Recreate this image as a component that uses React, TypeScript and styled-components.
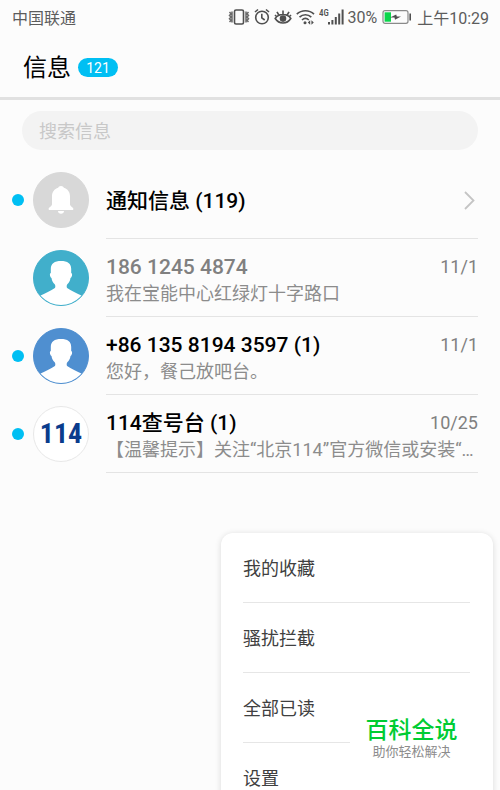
import React from "react";
import styled, { createGlobalStyle } from "styled-components";

const Global = createGlobalStyle`
  * { box-sizing: border-box; }
  body {
    margin: 0;
    background: #fcfcfc;
    font-family: Roboto, "Noto Sans CJK SC", sans-serif;
    color: #000;
  }
  button, input { font: inherit; color: inherit; }
`;

const Screen = styled.div`
  position: relative;
  min-height: 100vh;
  overflow: hidden;
`;

const StatusBar = styled.div`
  display: flex;
  align-items: center;
  justify-content: space-between;
  height: 34px;
  padding: 0 11px 0 12px;
  font-size: 16px;
  color: #5c5c5c;
`;

const StatusGroup = styled.div`
  display: flex;
  align-items: center;
  gap: 5px;
  white-space: nowrap;

  svg { flex: none; }
`;

const IconRow = styled.span`
  display: flex;
  align-items: center;
  gap: 4px;
  margin-right: -3px;
`;

const Header = styled.header`
  display: flex;
  align-items: center;
  gap: 7px;
  height: 66px;
  padding: 4px 23px 0;
  border-bottom: 3px solid #e1e1e1;
`;

const Title = styled.h1`
  margin: 0;
  font-size: 24px;
  line-height: 34px;
  font-weight: 400;
`;

const Badge = styled.span`
  min-width: 40px;
  height: 19px;
  border-radius: 10px;
  background: #00bff3;
  color: #fff;
  font-size: 14px;
  line-height: 20px;
  text-align: center;
`;

const Search = styled.input`
  display: block;
  width: calc(100% - 44px);
  height: 39px;
  margin: 11px 22px;
  padding: 2px 17px 0;
  border: 0;
  border-radius: 20px;
  outline: 0;
  background: #f3f3f3;
  font-size: 18px;

  &::placeholder { color: #c8c8c8; opacity: 1; }
`;

const List = styled.ul`
  margin: 0;
  padding: 0;
  list-style: none;
`;

const Row = styled.button`
  display: flex;
  align-items: center;
  width: 100%;
  height: 78px;
  padding: 0 22px 0 12px;
  border: 0;
  background: none;
  text-align: left;
`;

const Dot = styled.span<{ $on: boolean }>`
  flex: none;
  width: 12px;
  height: 12px;
  margin-right: 9px;
  border-radius: 50%;
  background: ${(p) => (p.$on ? "#00bff3" : "transparent")};
`;

const Avatar = styled.span<{ $color: string; $edge: string }>`
  flex: none;
  display: flex;
  align-items: center;
  justify-content: center;
  width: 56px;
  height: 56px;
  margin-right: 17px;
  border: 1px solid ${(p) => p.$edge};
  border-radius: 50%;
  overflow: hidden;
  background: ${(p) => p.$color};

  svg { flex: none; }
`;

const LogoText = styled.span`
  color: #0a3c8c;
  font-family: "Liberation Sans Narrow", "Roboto Condensed", Lato, sans-serif;
  font-size: 28px;
  font-weight: 700;
  line-height: 54px;
`;

const Body = styled.span<{ $single: boolean }>`
  flex: 1;
  min-width: 0;
  display: flex;
  flex-direction: column;
  justify-content: center;
  height: 78px;
  padding-top: ${(p) => (p.$single ? 2 : 4)}px;
  border-bottom: 1px solid #e4e4e4;
`;

const Line = styled.span`
  display: flex;
  align-items: center;
  justify-content: space-between;
  height: 28px;
`;

const Name = styled.span<{ $read: boolean }>`
  font-size: 21px;
  line-height: 28px;
  font-weight: 500;
  color: ${(p) => (p.$read ? "#808080" : "#000")};
`;

const DateText = styled.span`
  font-size: 18px;
  color: #808080;
`;

const Preview = styled.span`
  height: 26px;
  overflow: hidden;
  text-overflow: ellipsis;
  white-space: nowrap;
  font-size: 18px;
  line-height: 26px;
  color: #8c8c8c;
`;

const Menu = styled.div`
  position: absolute;
  top: 533px;
  right: 7px;
  width: 272px;
  padding: 0 23px 0 22px;
  border-radius: 12px;
  background: #fff;
  box-shadow: 0 1px 6px rgba(0, 0, 0, 0.14);
`;

const MenuItem = styled.button`
  display: block;
  width: 100%;
  height: 70px;
  padding: 0 0 1px;
  border: 0;
  border-bottom: 1px solid #e6e6e6;
  background: none;
  text-align: left;
  font-size: 18px;
  color: #404040;
`;

const Watermark = styled.div`
  position: absolute;
  top: 179px;
  right: 20px;
  width: 123px;
  height: 60px;
  padding-top: 5px;
  background: #fff;
  text-align: center;
`;

const Brand = styled.div`
  font-size: 23px;
  line-height: 28px;
  font-weight: 500;
  color: #00cc33;
`;

const Slogan = styled.div`
  font-size: 13px;
  line-height: 14px;
  color: #8c8c8c;
`;

const Person = ({ color }: { color: string }) => (
  <svg width="56" height="56" viewBox="0 0 56 56" aria-hidden="true">
    <circle cx="28" cy="28" r="28" fill={color} />
    <path
      fill="#fff"
      d="M28 11c6.500 0 10.200 2.500 10.200 8v4c1.400.4 1.100 3.800-.7 5-.4 3-1.400 4.600-3.200 6.200-.8 1.300-.8 2.800-.2 3.800 3.900 2.800 9.900 5.400 14.900 7.700A27 27 0 0 1 7 45.700c5-2.300 11-4.900 14.900-7.700.6-1 .6-2.500-.2-3.800-1.800-1.600-2.800-3.200-3.200-6.200-1.800-1.200-2.100-4.600-.7-5v-4c0-5.500 3.700-8 10.200-8z"
    />
  </svg>
);

const Bell = () => (
  <svg width="56" height="56" viewBox="0 0 56 56" fill="#fff" aria-hidden="true">
    <path d="M28 14c1.500 0 2.500.7 2.800 1.800 3.900 1.200 6.200 4.300 6.200 8.500v8c0 2 3.200 3 3.400 4.600 0 .7-.5 1.100-1.200 1.100H16.800c-.7 0-1.200-.4-1.200-1.100.2-1.600 3.400-2.600 3.400-4.600v-8c0-4.200 2.300-7.300 6.200-8.500.3-1.100 1.300-1.800 2.800-1.800z" />
    <path d="M25 39h6c0 1.700-1.300 2.700-3 2.700s-3-1-3-2.700z" />
  </svg>
);

const Vibrate = () => (
  <svg width="22" height="18" viewBox="0 0 22 18" fill="none" stroke="#505050" strokeWidth="1.600" aria-hidden="true">
    <rect x="6.500" y="2" width="9" height="14" rx="1.500" />
    <path strokeWidth="1.500" d="M1.500 4L3 5.700 1.500 7.400 3 9.100l-1.500 1.700L3 12.500 1.500 14M4 3.500v11M20.500 4L19 5.700l1.500 1.700L19 9.100l1.500 1.700-1.500 1.700 1.500 1.500M18 3.500v11" strokeOpacity=".85" />
  </svg>
);

const Alarm = () => (
  <svg width="16" height="18" viewBox="0 0 16 18" fill="none" stroke="#505050" strokeWidth="1.600" aria-hidden="true">
    <circle cx="8" cy="9.500" r="6.300" />
    <path d="M7.800 5.800v4l2.900 2.200M1 4l3-2.500M15 4l-3-2.500" />
  </svg>
);

const Eye = () => (
  <svg width="18" height="18" viewBox="0 0 18 18" fill="none" stroke="#505050" strokeWidth="1.600" aria-hidden="true">
    <path d="M1.200 10.500C3 7.700 5.700 6.500 9 6.500s6 1.200 7.800 4c-1.800 2.800-4.500 4.500-7.800 4.500s-6-1.700-7.800-4.500zM9 6.500v-4M4.800 7L3 3.800M13.200 7L15 3.800M2.500 8.500L1 7M15.500 8.500L17 7" />
    <circle cx="9" cy="10.600" r="2.500" fill="#505050" />
  </svg>
);

const Wifi = () => (
  <svg width="19" height="18" viewBox="0 0 19 18" fill="none" stroke="#505050" strokeWidth="1.700" aria-hidden="true">
    <path d="M.8 6.200c4.800-4.600 12.400-4.600 17.200 0M3.500 9.200c3.400-3.300 8.400-3.300 11.800 0M6 12c2-1.900 4.800-1.900 6.800 0" />
    <circle cx="9" cy="14.800" r="1.500" fill="#505050" stroke="none" />
    <path fill="#505050" stroke="none" d="M14.200 12.200v4.600l-2.400-2.300zM15.400 12.200v4.600l2.400-2.300z" />
  </svg>
);

const Signal = () => (
  <svg width="26" height="18" viewBox="0 0 26 18" fill="#505050" aria-hidden="true">
    <text x="0" y="8" fontFamily="Roboto Condensed, Liberation Sans Narrow, Roboto, sans-serif" fontSize="9" fontWeight="500">4G</text>
    <path d="M9 14h2v2.500H9zM12.400 12h2v4.500h-2zM15.800 9h2v7.500h-2zM19.200 5.500h2v11h-2zM22.600 1.500h2v15h-2z" />
  </svg>
);

const Battery = () => (
  <svg width="30" height="18" viewBox="0 0 30 18" fill="none" aria-hidden="true">
    <rect x="1" y="2.700" width="25" height="12.600" rx="2" stroke="#8a8a8a" strokeWidth="1.200" />
    <rect x="2.600" y="4.300" width="6.400" height="9.400" fill="#0bd64c" />
    <path fill="#505050" d="M8 9.600l6.200-3 .6 2L19 8.400l-6 3.400-.5-2.200zM27.400 5.500H29v7h-1.600z" />
  </svg>
);

const Chevron = () => (
  <svg width="14" height="20" viewBox="0 0 14 20" fill="none" stroke="#c4c4c4" strokeWidth="1.800" aria-hidden="true">
    <path d="M1 1L9.500 9.500 1 18" />
  </svg>
);

const messages = [
  { name: "通知信息 (119)", unread: true, kind: "bell" },
  { name: "186 1245 4874", unread: false, kind: "person", color: "#41afcb", date: "11/1", text: "我在宝能中心红绿灯十字路口" },
  { name: "+86 135 8194 3597 (1)", unread: true, kind: "person", color: "#4f8fd0", date: "11/1", text: "您好，餐己放吧台。" },
  { name: "114查号台 (1)", unread: true, kind: "logo", date: "10/25", text: "【温馨提示】关注“北京114”官方微信或安装“…" },
];

const menuItems = ["我的收藏", "骚扰拦截", "全部已读", "设置"];

export default function App() {
  return (
    <Screen>
      <Global />
      <StatusBar>
        <span>中国联通</span>
        <StatusGroup>
          <IconRow>
            <Vibrate />
            <Alarm />
            <Eye />
            <Wifi />
            <Signal />
          </IconRow>
          <span>30%</span>
          <Battery />
          <span>上午10:29</span>
        </StatusGroup>
      </StatusBar>
      <Header>
        <Title>信息</Title>
        <Badge>121</Badge>
      </Header>
      <Search type="search" placeholder="搜索信息" aria-label="搜索信息" />
      <List>
        {messages.map((m) => (
          <li key={m.name}>
            <Row type="button">
              <Dot $on={m.unread} />
              <Avatar
                $color={m.kind === "bell" ? "#d8d8d8" : m.color ?? "#fff"}
                $edge={m.kind === "logo" ? "#e8e8e8" : m.color ?? "#d8d8d8"}
              >
                {m.kind === "bell" && <Bell />}
                {m.kind === "person" && <Person color={m.color!} />}
                {m.kind === "logo" && <LogoText>114</LogoText>}
              </Avatar>
              <Body $single={!m.text}>
                <Line>
                  <Name $read={!m.unread}>{m.name}</Name>
                  {m.date ? <DateText>{m.date}</DateText> : <Chevron />}
                </Line>
                {m.text && <Preview>{m.text}</Preview>}
              </Body>
            </Row>
          </li>
        ))}
      </List>
      <Menu>
        {menuItems.map((item) => (
          <MenuItem key={item} type="button">{item}</MenuItem>
        ))}
        <Watermark>
          <Brand>百科全说</Brand>
          <Slogan>助你轻松解决</Slogan>
        </Watermark>
      </Menu>
    </Screen>
  );
}
